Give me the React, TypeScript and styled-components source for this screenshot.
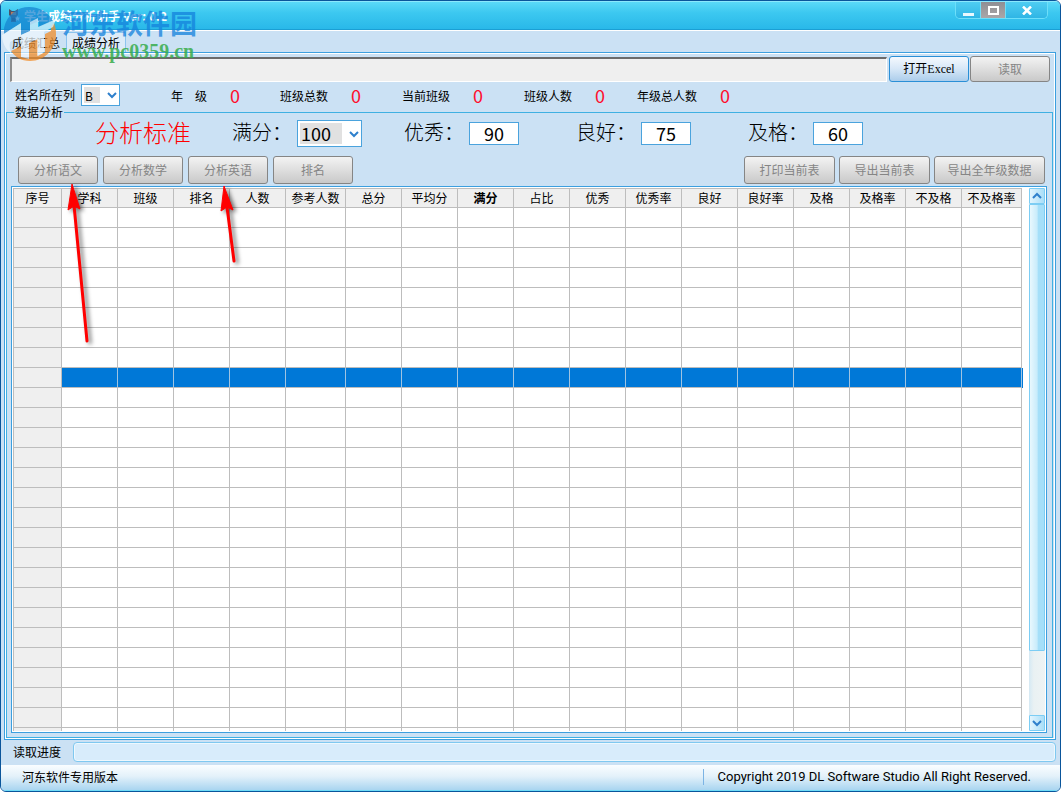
import React from 'react';
import styled, { createGlobalStyle, css } from 'styled-components';

const GlobalStyle = createGlobalStyle`
  * { box-sizing: border-box; }
  body {
    margin: 0;
    background: #fff;
    font: 12px/16px "Noto Sans CJK SC", sans-serif;
    color: #000;
  }
  button, input, select { font: inherit; color: inherit; margin: 0; padding: 0; border-radius: 0; }
`;

const AppWindow = styled.div`
  position: relative;
  display: flex;
  flex-direction: column;
  height: 100vh;
  min-height: 400px;
  border: 1px solid #0a559b;
  border-radius: 6px;
  background: #cbe1f4;
  overflow: hidden;
`;

const TitleBar = styled.header`
  display: flex;
  justify-content: space-between;
  flex: none;
  height: 29px;
  padding: 0 12px 0 7px;
  border-top: 1px solid #8be8fd;
  border-bottom: 1px solid #1b9fd4;
  background: linear-gradient(#5ad9f8, #3cc8f0 40%, #29b8e9);
`;

const Title = styled.h1`
  display: flex;
  align-items: center;
  gap: 4px;
  margin: 0;
  color: #fff;
  font: bold 12px/30px "Noto Sans CJK SC", sans-serif;
`;

const WindowButtons = styled.div`
  display: flex;
  height: 17px;
  border: 1px solid #6edff9;
  border-top: 0;
  border-radius: 0 0 5px 5px;
  overflow: hidden;
`;

const WindowButton = styled.button<{ $wide?: boolean; $grey?: boolean }>`
  display: flex;
  align-items: center;
  justify-content: center;
  width: ${p => (p.$wide ? 41 : 25)}px;
  border: 0;
  border-right: 1px solid #6edff9;
  background: ${p => (p.$grey ? 'linear-gradient(#8f8f94, #aaa6a8)' : 'linear-gradient(#4fcdf2, #2fb5e5)')};
  &:last-child { border-right: 0; }
`;

const TabStrip = styled.nav`
  display: flex;
  align-items: flex-end;
  flex: none;
  height: 22px;
  padding-left: 5px;
  border-top: 1px solid #fff;
`;

const Tab = styled.button<{ $active?: boolean }>`
  height: 20px;
  padding: 0 5px;
  border: 1px solid ${p => (p.$active ? '#8cc4ee' : 'transparent')};
  border-bottom: 0;
  border-radius: 2px 2px 0 0;
  background: ${p => (p.$active ? '#dcebf8' : 'transparent')};
  color: ${p => (p.$active ? '#000' : '#222')};
`;

const Pane = styled.main`
  display: flex;
  flex-direction: column;
  flex: 1;
  min-height: 0;
  margin: 0 4px 0 3px;
  border: 1px solid #3c9fdf;
  box-shadow: inset 0 0 0 1px #fff;
  padding: 3px 2px 1px 1px;
`;

const Toolbar = styled.div`
  display: flex;
  align-items: flex-end;
  flex: none;
  gap: 1px;
  height: 26px;
  padding: 0 3px 0 4px;
`;

const PathInput = styled.input`
  flex: 1;
  min-width: 0;
  height: 25px;
  margin-right: 1px;
  border: 1px solid #fff;
  border-top: 2px solid #6b6b6b;
  border-left: 2px solid #8a8a8a;
  background: #efefef;
`;

const PushButton = styled.button<{ $width: number; $primary?: boolean }>`
  flex: none;
  width: ${p => p.$width}px;
  height: 100%;
  border: 1px solid #858585;
  border-radius: 3px;
  background: linear-gradient(#f3f3f3, #dedede 50%, #c9c9c9);
  color: #858585;
  ${p => p.$primary && css`
    border-color: #2a8fd6;
    background: linear-gradient(#f4f9fe, #d6e7f7 50%, #accdeb);
    color: #000;
    font-family: "Liberation Serif", "Noto Sans CJK SC", serif;
    font-size: 12px;
  `}
`;

const InfoRow = styled.div`
  display: flex;
  flex: none;
  height: 20px;
  margin-top: 2px;
  padding-left: 9px;
  line-height: 22px;
`;

const SelectBox = styled.div<{ $large?: boolean }>`
  position: relative;
  flex: none;
  width: ${p => (p.$large ? 65 : 39)}px;
  height: ${p => (p.$large ? 27 : 22)}px;
  font-size: ${p => (p.$large ? 18 : 12)}px;
  select {
    appearance: none;
    width: 100%;
    height: 100%;
    padding: 0 0 2px 3px;
    border: 1px solid #4aa3dd;
    background: linear-gradient(#e1e1e1, #e1e1e1) 2px 2px / calc(100% - 21px) calc(100% - 4px) no-repeat #fff;
  }
  svg { position: absolute; right: 3px; top: calc(50% - 4px); pointer-events: none; }
`;

const ColumnLabel = styled.label`
  width: 66px;
`;

const Stats = styled.dl`
  display: grid;
  grid-template-columns: 109px 122px 122px 113px auto;
  margin: 0 0 0 51px;
`;

const Stat = styled.div`
  display: flex;
  gap: 23px;
  dt { line-height: 24px; }
  dd { margin: 0; color: #ff0d2d; font-size: 18px; line-height: 22px; }
`;

const Group = styled.fieldset`
  display: flex;
  flex-direction: column;
  flex: 1;
  min-width: 0;
  min-height: 0;
  margin: 0;
  padding: 0 5px 4px 4px;
  border: 1px solid #3fb0e2;
  legend { margin-left: 3px; padding: 0 1px; }
`;

const Standards = styled.div`
  display: flex;
  align-items: center;
  flex: none;
  height: 27px;
`;

const StandardsTitle = styled.h2`
  width: 221px;
  margin: 0;
  padding: 0 0 4px 84px;
  color: #f00;
  font-size: 24px;
  line-height: 26px;
  font-weight: 300;
`;

const Standard = styled.div`
  display: flex;
  align-items: center;
  width: 172px;
  label { width: 65px; padding-bottom: 4px; font-size: 20px; line-height: 26px; font-weight: 300; }
  > input {
    width: 50px;
    height: 23px;
    padding-bottom: 2px;
    border: 1px solid #4aa3dd;
    background: #fff;
    font-size: 18px;
    text-align: center;
  }
`;

const Actions = styled.div`
  display: flex;
  justify-content: space-between;
  flex: none;
  height: 28px;
  margin: 9px 2px 2px 7px;
`;

const ActionSet = styled.div<{ $gap: number }>`
  display: flex;
  gap: ${p => p.$gap}px;
`;

const GridBox = styled.div`
  display: flex;
  justify-content: space-between;
  flex: 1;
  min-height: 0;
  padding: 1px;
  border: 1px solid #3c9fdf;
  background: #fff;
`;

const GridView = styled.div`
  flex: 1;
  min-width: 0;
  overflow: hidden;
`;

const DataTable = styled.table`
  table-layout: fixed;
  width: 1px;
  border-collapse: separate;
  border-spacing: 0;
  border: 1px solid #bdbdbd;
  border-width: 1px 0 0 1px;
  th, td {
    height: 20px;
    padding: 0;
    border: 1px solid #bdbdbd;
    border-width: 0 1px 1px 0;
    font-weight: normal;
    line-height: 18px;
    white-space: nowrap;
  }
  thead th { height: 19px; background: #efefef; }
  tbody th { background: #efefef; }
`;

const HeadCell = styled.th<{ $bold?: boolean }>`
  &&& { font-weight: ${p => (p.$bold ? 'bold' : 'normal')}; }
`;

const Row = styled.tr<{ $selected: boolean }>`
  ${p => p.$selected && css`
    td { background: #0078d7; border-right-color: #9fc4e2; }
    td:last-child { box-shadow: 1px 0 #0078d7; }
  `}
`;

const ScrollBar = styled.div`
  display: flex;
  flex-direction: column;
  flex: none;
  width: 16px;
  background: linear-gradient(90deg, #d5e9f4, #e9f1f3 30%, #eef3f4);
`;

const ScrollButton = styled.button`
  display: flex;
  align-items: center;
  justify-content: center;
  height: 16px;
  border: 1px solid #7ccdf4;
  border-radius: 1px;
  background: linear-gradient(90deg, #e2f5fe, #a9def8);
`;

const ScrollTrack = styled.div`
  flex: 1;
`;

const ScrollThumb = styled.div`
  height: 87.5%;
  border: 1px solid #7ccdf4;
  border-radius: 1px;
  background: linear-gradient(90deg, #e9f8fe, #c9ecfb 50%, #a5dff9 60%, #a5dff9);
`;

const ProgressRow = styled.div`
  display: flex;
  align-items: flex-start;
  flex: none;
  height: 25px;
  padding: 2px 4px 0 12px;
`;

const ProgressLabel = styled.span`
  width: 60px;
  line-height: 20px;
`;

const ProgressBar = styled.div`
  flex: 1;
  height: 20px;
  border: 1px solid #7fc8f0;
  border-radius: 4px;
  background: #d8ecfb;
  box-shadow: inset 0 0 0 1px #eef8fe;
`;

const StatusBar = styled.footer`
  display: flex;
  align-items: center;
  justify-content: space-between;
  flex: none;
  height: 26px;
  padding: 0 29px 2px 21px;
  border-bottom: 1px solid #6fdcf8;
  background: linear-gradient(#fafdff, #e3f1fa 45%, #a9d5f0);
`;

const Copyright = styled.span`
  padding-left: 14px;
  border-left: 1px solid #7cb4e4;
  font-family: Roboto, "Noto Sans CJK SC", sans-serif;
  font-size: 13px;
`;

const Watermark = styled.div`
  position: absolute;
  left: 0;
  top: 4px;
  display: flex;
  align-items: flex-start;
  pointer-events: none;
`;

const WatermarkText = styled.div`
  display: flex;
  flex-direction: column;
  margin-left: 4px;
`;

const SiteName = styled.span`
  color: rgba(20, 130, 220, 0.75);
  font-size: 27px;
  line-height: 36px;
  font-weight: bold;
`;

const SiteUrl = styled.span`
  color: rgba(55, 172, 75, 0.85);
  font: bold 20px/20px "Liberation Serif", serif;
`;

const Arrows = styled.svg`
  position: absolute;
  left: -1px;
  top: -1px;
  pointer-events: none;
  filter: drop-shadow(3px 2px 2px rgba(0, 0, 0, 0.55));
`;

const columns: [string, number][] = [
  ['序号', 48], ['学科', 56], ['班级', 56], ['排名', 56], ['人数', 56], ['参考人数', 60],
  ['总分', 56], ['平均分', 56], ['满分', 56], ['占比', 56], ['优秀', 56], ['优秀率', 56],
  ['良好', 56], ['良好率', 56], ['及格', 56], ['及格率', 56], ['不及格', 56], ['不及格率', 60],
];

const stats = ['年　级', '班级总数', '当前班级', '班级人数', '年级总人数'];

const thresholds = [
  { id: 'excellent', label: '优秀：', value: '90' },
  { id: 'good', label: '良好：', value: '75' },
  { id: 'pass', label: '及格：', value: '60' },
];

const ROWS = 40;
const SELECTED_ROW = 8;

const Chevron = ({ up }: { up?: boolean }) => (
  <svg width="10" height="8" viewBox="0 0 10 8" fill="none" stroke="#2f80cc" strokeWidth="2">
    <path d={up ? 'M1 6l4-4 4 4' : 'M1 2l4 4 4-4'} />
  </svg>
);

const AppIcon = () => (
  <svg width="12" height="16" viewBox="0 0 12 16">
    <path d="M1 1l3 2h3l3-2v6l-2 2v5H3V9L1 7z" fill="#4b5268" />
    <path d="M3 4h5v3H3z" fill="#b87a5c" />
    <path d="M4 10h3v3H4z" fill="#31394f" />
    <path d="M9.500 8l.8 1.600 1.700.2-1.200 1.200.3 1.700-1.600-.8-1.500.8.3-1.700L7 9.800l1.700-.2z" fill="#fff" />
  </svg>
);

const SiteLogo = () => (
  <svg width="57" height="59" viewBox="0 0 57 59">
    <g opacity="0.72">
      <path d="M3 23C6 9 17 2 28 2c11 0 20 6 24 14L38 22v-6l-9 4v6l-9 4V18L3 29z" fill="#1683d0" />
      <path d="M53 18c7 19-5 38-24 38-9 0-15-4-19-10l10-5v11l8 2V38l9-4v17l7-4V29l6-3c0-3 0-5 3-8z" fill="#f28b24" />
    </g>
    <path
      d="M1 30l19-12v12l9-4v-9l8-4v9l18-8-3 8-9 5v20l-7 4V34l-8 4v16l-8-2V31L9 37c-1 5 0 8 2 12C4 44 1 37 1 30z"
      fill="#f2f9fe"
      opacity="0.68"
    />
  </svg>
);

export default function App() {
  return (
    <>
      <GlobalStyle />
      <AppWindow>
        <TitleBar>
          <Title><AppIcon />学生成绩分析助手 Ver: 0.2</Title>
          <WindowButtons>
            <WindowButton aria-label="最小化">
              <svg width="11" height="12"><path d="M0 9h11v3H0z" fill="#e8f8fe" /></svg>
            </WindowButton>
            <WindowButton $grey aria-label="最大化">
              <svg width="11" height="9"><path d="M1 1h9v7H1z" fill="none" stroke="#fff" strokeWidth="2" /></svg>
            </WindowButton>
            <WindowButton $wide aria-label="关闭">
              <svg width="10" height="9"><path d="M1 0.500l8 8M9 0.500l-8 8" stroke="#fff" strokeWidth="2.500" /></svg>
            </WindowButton>
          </WindowButtons>
        </TitleBar>

        <TabStrip>
          <Tab>成绩汇总</Tab>
          <Tab $active>成绩分析</Tab>
        </TabStrip>

        <Pane>
          <Toolbar>
            <PathInput aria-label="文件路径" readOnly />
            <PushButton $width={80} $primary>打开Excel</PushButton>
            <PushButton $width={80} disabled>读取</PushButton>
          </Toolbar>

          <InfoRow>
            <ColumnLabel htmlFor="name-column">姓名所在列</ColumnLabel>
            <SelectBox>
              <select id="name-column"><option>B</option></select>
              <Chevron />
            </SelectBox>
            <Stats>
              {stats.map(label => (
                <Stat key={label}><dt>{label}</dt><dd>0</dd></Stat>
              ))}
            </Stats>
          </InfoRow>

          <Group>
            <legend>数据分析</legend>
            <Standards>
              <StandardsTitle>分析标准</StandardsTitle>
              <Standard>
                <label htmlFor="full-score">满分：</label>
                <SelectBox $large>
                  <select id="full-score"><option>100</option></select>
                  <Chevron />
                </SelectBox>
              </Standard>
              {thresholds.map(t => (
                <Standard key={t.id}>
                  <label htmlFor={t.id}>{t.label}</label>
                  <input id={t.id} defaultValue={t.value} />
                </Standard>
              ))}
            </Standards>

            <Actions>
              <ActionSet $gap={5}>
                <PushButton $width={80} disabled>分析语文</PushButton>
                <PushButton $width={80} disabled>分析数学</PushButton>
                <PushButton $width={80} disabled>分析英语</PushButton>
                <PushButton $width={80} disabled>排名</PushButton>
              </ActionSet>
              <ActionSet $gap={4}>
                <PushButton $width={91} disabled>打印当前表</PushButton>
                <PushButton $width={91} disabled>导出当前表</PushButton>
                <PushButton $width={111} disabled>导出全年级数据</PushButton>
              </ActionSet>
            </Actions>

            <GridBox>
              <GridView>
                <DataTable>
                  <colgroup>
                    {columns.map(([name, width]) => <col key={name} width={width} />)}
                  </colgroup>
                  <thead>
                    <tr>
                      {columns.map(([name]) => (
                        <HeadCell key={name} scope="col" $bold={name === '满分'}>{name}</HeadCell>
                      ))}
                    </tr>
                  </thead>
                  <tbody>
                    {Array.from({ length: ROWS }, (_, r) => (
                      <Row key={r} $selected={r === SELECTED_ROW}>
                        <th scope="row" />
                        {columns.slice(1).map(([name]) => <td key={name} />)}
                      </Row>
                    ))}
                  </tbody>
                </DataTable>
              </GridView>
              <ScrollBar>
                <ScrollButton aria-label="向上滚动"><Chevron up /></ScrollButton>
                <ScrollTrack><ScrollThumb /></ScrollTrack>
                <ScrollButton aria-label="向下滚动"><Chevron /></ScrollButton>
              </ScrollBar>
            </GridBox>
          </Group>
        </Pane>

        <ProgressRow>
          <ProgressLabel id="progress-label">读取进度</ProgressLabel>
          <ProgressBar role="progressbar" aria-labelledby="progress-label" aria-valuenow={0} />
        </ProgressRow>

        <StatusBar>
          <span>河东软件专用版本</span>
          <Copyright>Copyright 2019 DL Software Studio All Right Reserved.</Copyright>
        </StatusBar>

        <Watermark>
          <SiteLogo />
          <WatermarkText>
            <SiteName>河东软件园</SiteName>
            <SiteUrl>www.pc0359.cn</SiteUrl>
          </WatermarkText>
        </Watermark>

        <Arrows width="250" height="350" fill="#f00" stroke="#f00">
          <path d="M87 341L74 205" strokeWidth="3" strokeLinecap="round" />
          <path d="M72 184l8 25-6-3-6 4z" strokeWidth="1" />
          <path d="M234 261L227 207" strokeWidth="3" strokeLinecap="round" />
          <path d="M224 186l9 24-6-3-6 4z" strokeWidth="1" />
        </Arrows>
      </AppWindow>
    </>
  );
}
